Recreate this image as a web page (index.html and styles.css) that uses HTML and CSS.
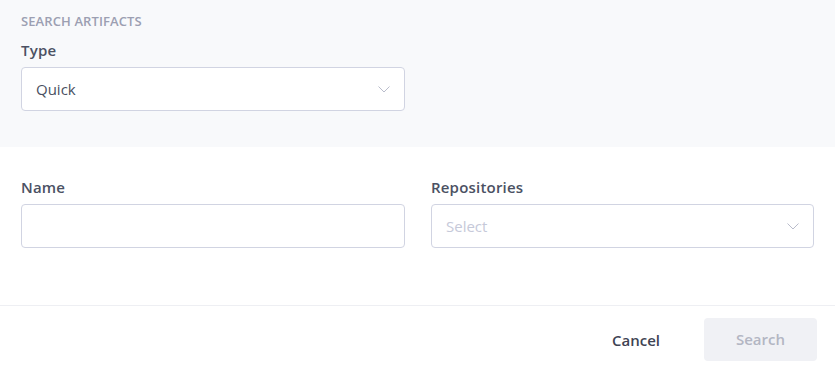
FILE: index.html
```html
<!DOCTYPE html>
<html>
<head>
<meta charset="utf-8">
<link rel="stylesheet" href="styles.css">
</head>
<body>
<div class="dialog">
  <section class="top">
    <div class="heading">SEARCH ARTIFACTS</div>
    <div class="field half">
      <label class="label">Type</label>
      <div class="select">
        <span class="value">Quick</span>
        <svg class="chev" width="12" height="7" viewBox="0 0 12 7"><path d="M0.5 0.5 L6 6 L11.5 0.5" fill="none" stroke="#b9bccb" stroke-width="1"/></svg>
      </div>
    </div>
  </section>
  <section class="fields">
    <div class="field">
      <label class="label">Name</label>
      <div class="input"></div>
    </div>
    <div class="field">
      <label class="label">Repositories</label>
      <div class="select">
        <span class="placeholder">Select</span>
        <svg class="chev" width="12" height="7" viewBox="0 0 12 7"><path d="M0.5 0.5 L6 6 L11.5 0.5" fill="none" stroke="#b9bccb" stroke-width="1"/></svg>
      </div>
    </div>
  </section>
  <footer class="footer">
    <button class="btn-cancel">Cancel</button>
    <button class="btn-search">Search</button>
  </footer>
</div>
</body>
</html>
```

FILE: styles.css
```css
* { box-sizing: border-box; }
html, body { margin: 0; padding: 0; background: #ffffff; }
body {
  font-family: "Open Sans", "Noto Sans", sans-serif;
  font-size: 15px;
  color: #4a5061;
}
.dialog { width: 835px; }
.top {
  background: #f8f9fb;
  padding: 13px 21px 36px 21px;
  height: 147px;
}
.heading {
  font-size: 13px;
  line-height: 16px;
  font-weight: 600;
  color: #9c9fb2;
  letter-spacing: 0.1px;
  margin-bottom: 11px;
}
.field { display: flex; flex-direction: column; }
.half { width: 384px; }
.label {
  font-size: 15px;
  line-height: 20px;
  font-weight: 600;
  color: #4b5163;
  letter-spacing: 0.2px;
  margin-bottom: 7px;
}
.select, .input {
  height: 44px;
  border: 1px solid #d1d4e2;
  border-radius: 4px;
  background: #fff;
  display: flex;
  align-items: center;
  justify-content: space-between;
  padding: 0 14px 0 14px;
  line-height: 20px;
}
.value { color: #4a5061; }
.placeholder { color: #c6c9d9; }
.chev { display: block; margin-top: 1px; }
.fields {
  display: grid;
  grid-template-columns: 384px 383px;
  column-gap: 26px;
  padding: 30px 21px 57px 21px;
}
.footer {
  border-top: 1px solid #eeeff3;
  display: flex;
  justify-content: flex-end;
  align-items: center;
  padding: 12px 18px 11px 0;
  gap: 44px;
}
button {
  font-family: inherit;
  font-size: 15px;
  font-weight: 600;
  border: none;
  cursor: pointer;
}
.btn-cancel {
  background: none;
  padding: 0;
  color: #3e4353;
  line-height: 20px;
}
.btn-search {
  width: 113px;
  height: 43px;
  background: #f0f1f5;
  color: #b3b6c3;
  border-radius: 4px;
  padding: 0 0 1px 0;
}
```
